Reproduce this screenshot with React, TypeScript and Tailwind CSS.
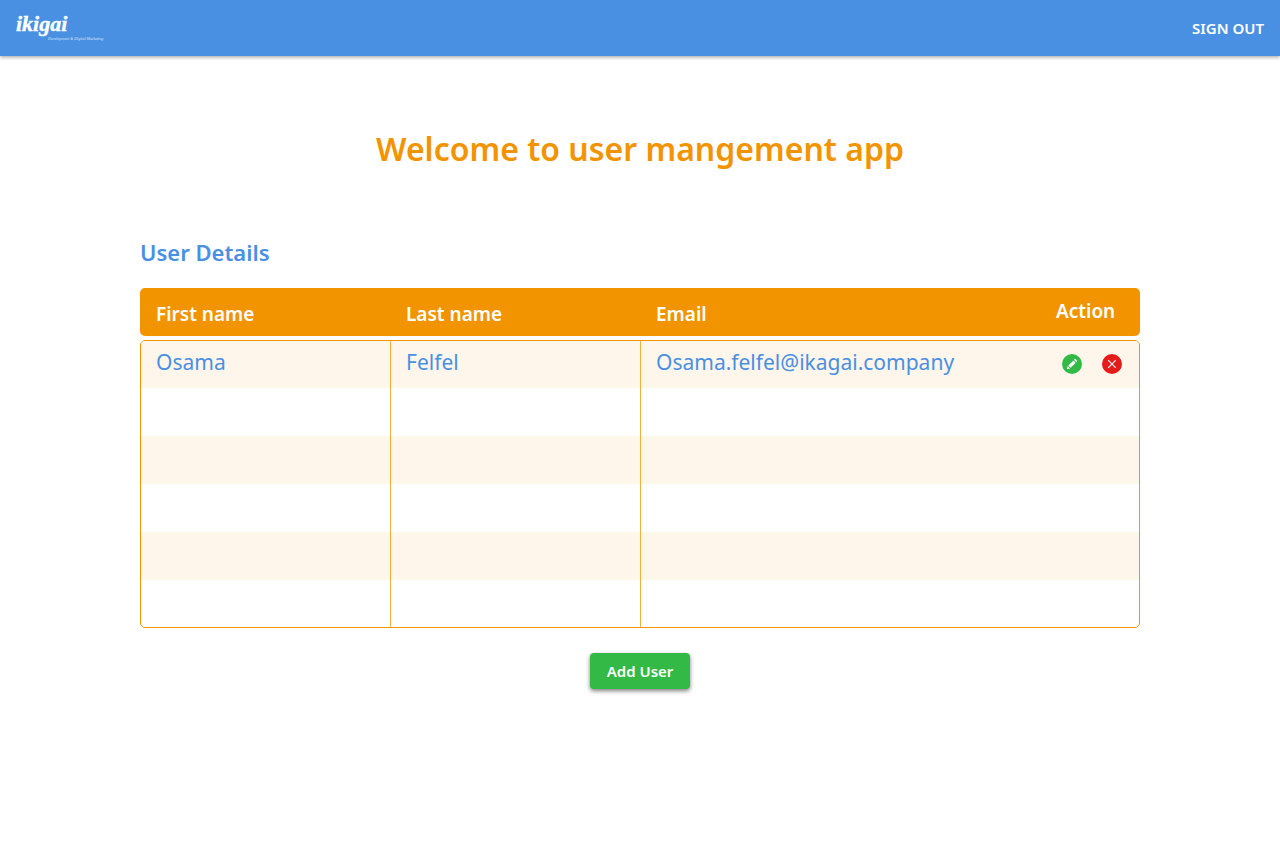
type User = { first: string; last: string; email: string };

const users: User[] = [
  { first: "Osama", last: "Felfel", email: "Osama.felfel@ikagai.company" },
];

const ROW_COUNT = 6;

const rows: (User | null)[] = Array.from(
  { length: ROW_COUNT },
  (_, i) => users[i] ?? null,
);

function Logo() {
  return (
    <a href="#" aria-label="ikigai home" className="block">
      <svg width="96" height="36" viewBox="0 0 96 36" aria-hidden="true">
        <text
          x="0"
          y="21"
          fill="#fff"
          stroke="#fff"
          strokeWidth="0.4"
          className="font-['Liberation_Serif',serif] text-[22px] font-bold italic"
        >
          ikigai
        </text>
        <text
          x="32"
          y="30"
          fill="#fff"
          opacity="0.75"
          className="font-['Liberation_Serif',serif] text-[4px] italic"
        >
          Development &amp; Digital Marketing
        </text>
      </svg>
    </a>
  );
}

function EditIcon() {
  return (
    <svg viewBox="0 0 20 20" className="block size-5" aria-hidden="true">
      <circle cx="10" cy="10" r="10" fill="#32b946" />
      <path
        d="M4.9 15.2l.8-3.1 2.3 2.3zM6.3 11.5l5.1-5.1 2.3 2.3-5.1 5.1zM12 5.8l.6-.6c.3-.3.8-.3 1.1 0l1.2 1.2c.3.3.3.8 0 1.1l-.6.6z"
        fill="#fff"
      />
    </svg>
  );
}

function DeleteIcon() {
  return (
    <svg viewBox="0 0 20 20" className="block size-5" aria-hidden="true">
      <circle cx="10" cy="10" r="10" fill="#e41b1b" />
      <path
        d="M6.2 6.2l7.6 7.6M13.8 6.2l-7.6 7.6"
        stroke="#fff"
        strokeWidth="1.1"
        fill="none"
      />
    </svg>
  );
}

export default function App() {
  return (
    <div className="min-h-screen bg-white font-['Noto_Sans',sans-serif]">
      <header className="flex h-14 items-center justify-between bg-[#4990e2] px-4 shadow-[0_1px_4px_rgba(0,0,0,0.4)]">
        <Logo />
        <button type="button" className="text-[15px] font-semibold text-white">
          SIGN OUT
        </button>
      </header>

      <main className="mx-auto max-w-[1000px] pt-[68px]">
        <h1 className="text-center text-[32px] leading-[50px] font-semibold text-[#f29400]">
          Welcome to user mangement app
        </h1>

        <h2 className="mt-[62px] text-[22px] leading-8 font-semibold text-[#4990e2]">
          User Details
        </h2>

        <table className="mt-5 block w-full text-left">
          <thead className="block rounded-[5px] bg-[#f29400] text-[19px] leading-6 text-white">
            <tr className="grid h-12 grid-cols-[5fr_5fr_8fr_2fr]">
              <th className="px-4 pt-3.5 font-semibold">First name</th>
              <th className="px-4 pt-3.5 font-semibold">Last name</th>
              <th className="px-4 pt-3.5 font-semibold">Email</th>
              <th className="px-4 pt-[11px] font-semibold">Action</th>
            </tr>
          </thead>
          <tbody className="mt-1 block overflow-hidden rounded-[5px] border border-[#f29400] text-[21px] leading-7 text-[#4990e2]">
            {rows.map((user, i) => (
              <tr
                key={i}
                className="-mx-px grid h-12 grid-cols-[5fr_5fr_8fr_2fr] odd:bg-[#fef6ea] first:h-[47px] last:h-[47px]"
              >
                <td className="px-4 pt-[7px]">{user?.first}</td>
                <td className="border-l border-[#f5ad3d] px-[15px] pt-[7px]">
                  {user?.last}
                </td>
                <td className="border-l border-[#f5ad3d] px-[15px] pt-[7px]">
                  {user?.email}
                </td>
                <td className="flex items-start justify-end gap-5 pt-[13px] pr-[18px]">
                  {user && (
                    <>
                      <button type="button" aria-label="Edit user">
                        <EditIcon />
                      </button>
                      <button type="button" aria-label="Delete user">
                        <DeleteIcon />
                      </button>
                    </>
                  )}
                </td>
              </tr>
            ))}
          </tbody>
        </table>

        <div className="mt-[25px] flex justify-center">
          <button
            type="button"
            className="h-9 rounded-sm bg-[#32b946] px-[17px] text-[15px] font-semibold text-white shadow-[0_2px_4px_rgba(0,0,0,0.5)]"
          >
            Add User
          </button>
        </div>
      </main>
    </div>
  );
}
